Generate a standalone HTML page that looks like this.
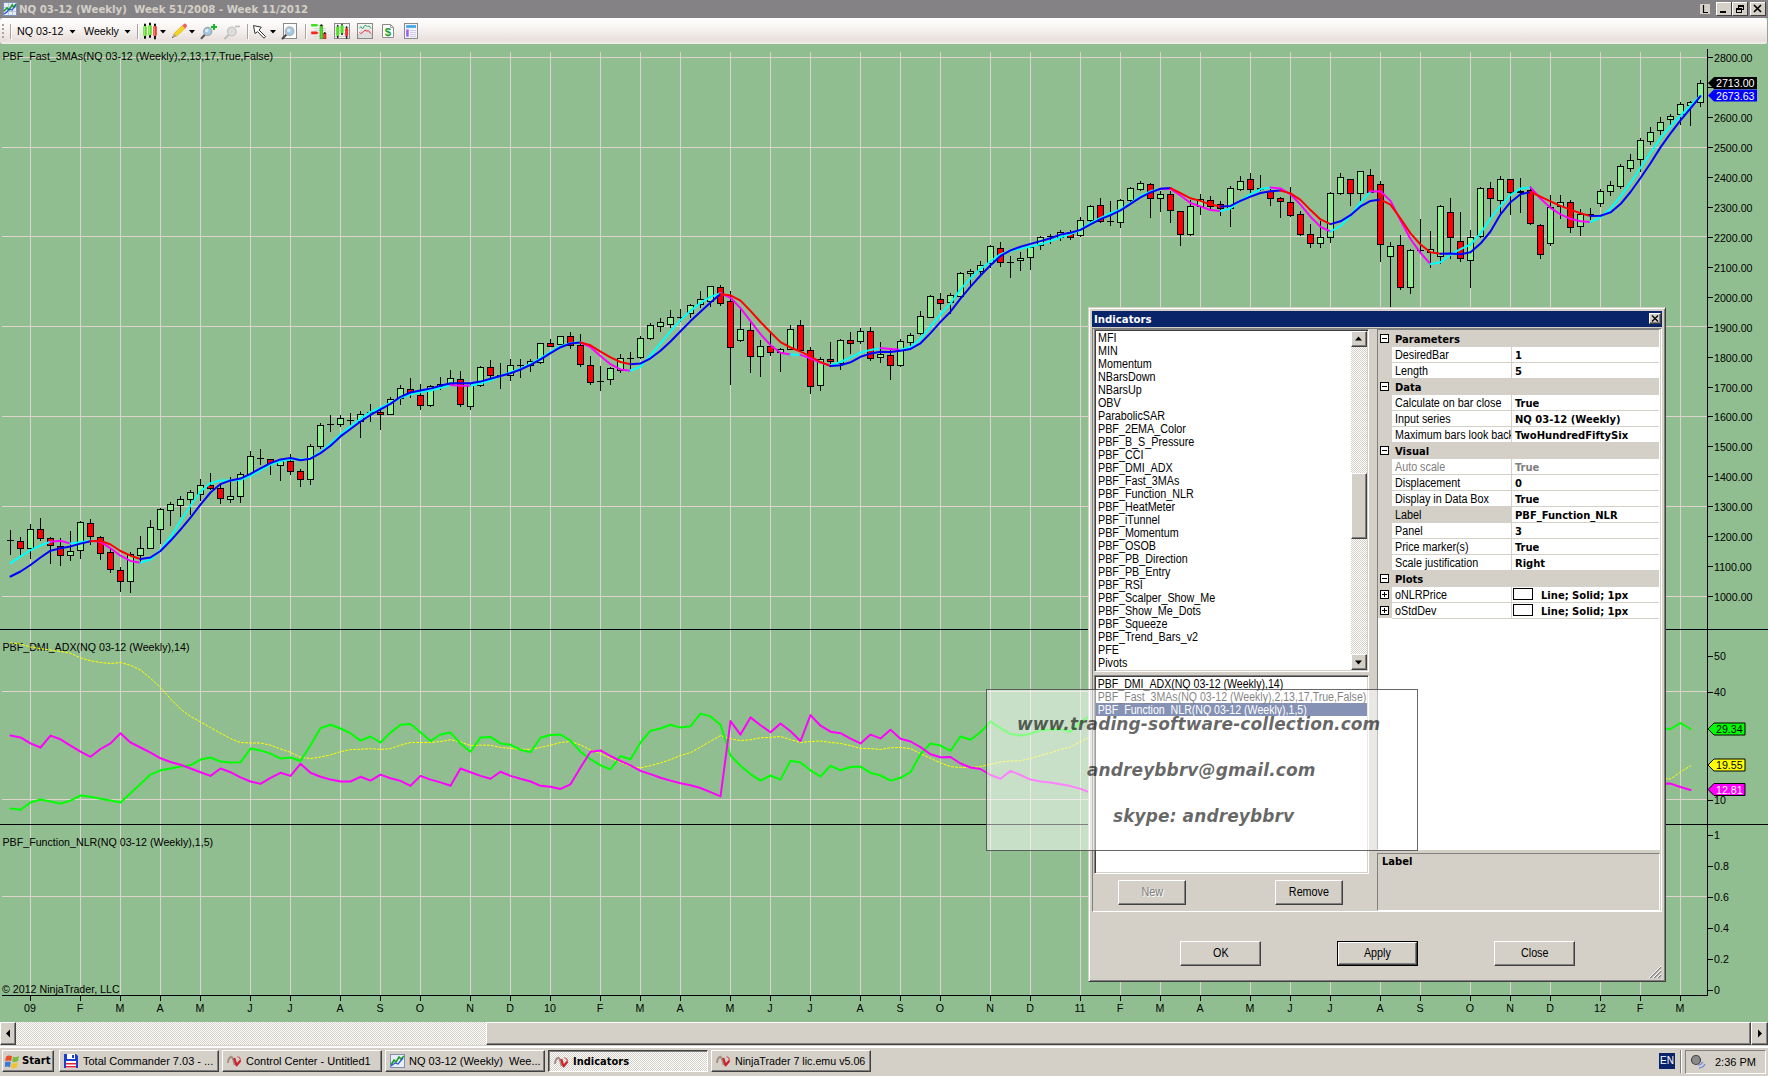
<!DOCTYPE html><html><head><meta charset="utf-8"><title>NQ 03-12 (Weekly)</title><style>
*{box-sizing:border-box;margin:0;padding:0}
html,body{width:1768px;height:1076px;overflow:hidden;background:#91BE90;font-family:"Liberation Sans",sans-serif;font-size:11px;color:#000}
.abs{position:absolute}
#title{left:0;top:0;width:1768px;height:18px;background:#848284;color:#D4D0C8;font-family:'DejaVu Sans Condensed','Liberation Sans',sans-serif;font-weight:bold;font-size:11.35px;line-height:17px;white-space:pre}
#toolbar{left:0;top:18px;width:1768px;height:26px;background:linear-gradient(#ffffff 0%,#fbf9f8 25%,#f2edeb 55%,#e7dfdc 86%,#eee8e6 96%,#f6f1f0 100%)}
.raised{background:#D4D0C8;border:1px solid;border-color:#fff #404040 #404040 #fff;box-shadow:inset -1px -1px 0 #808080,inset 1px 1px 0 #D4D0C8}
.sunken{border:1px solid;border-color:#808080 #fff #fff #808080;box-shadow:inset 1px 1px 0 #404040,inset -1px -1px 0 #D4D0C8}
.btn{background:#D4D0C8;border:1px solid;border-color:#fff #404040 #404040 #fff;box-shadow:inset -1px -1px 0 #808080;text-align:center;font-size:11px}
.tb{top:1050px;height:22px;background:#D4D0C8;border:1px solid;border-color:#fff #404040 #404040 #fff;box-shadow:inset -1px -1px 0 #808080;font-size:11px;line-height:20px;white-space:nowrap;overflow:hidden}
</style></head><body>
<svg class="abs" style="left:0;top:0" width="1768" height="1076" viewBox="0 0 1768 1076" font-family="Liberation Sans, sans-serif" font-size="10.67">
<g shape-rendering="crispEdges" stroke="#DDD5CD" stroke-width="1"><line x1="30.5" y1="57" x2="30.5" y2="995"/><line x1="80.5" y1="57" x2="80.5" y2="995"/><line x1="120.5" y1="57" x2="120.5" y2="995"/><line x1="160.5" y1="57" x2="160.5" y2="995"/><line x1="200.5" y1="57" x2="200.5" y2="995"/><line x1="250.5" y1="57" x2="250.5" y2="995"/><line x1="290.5" y1="52" x2="290.5" y2="995"/><line x1="340.5" y1="52" x2="340.5" y2="995"/><line x1="380.5" y1="52" x2="380.5" y2="995"/><line x1="420.5" y1="52" x2="420.5" y2="995"/><line x1="470.5" y1="52" x2="470.5" y2="995"/><line x1="510.5" y1="52" x2="510.5" y2="995"/><line x1="550.5" y1="52" x2="550.5" y2="995"/><line x1="600.5" y1="52" x2="600.5" y2="995"/><line x1="640.5" y1="52" x2="640.5" y2="995"/><line x1="680.5" y1="52" x2="680.5" y2="995"/><line x1="730.5" y1="52" x2="730.5" y2="995"/><line x1="770.5" y1="52" x2="770.5" y2="995"/><line x1="810.5" y1="52" x2="810.5" y2="995"/><line x1="860.5" y1="52" x2="860.5" y2="995"/><line x1="900.5" y1="52" x2="900.5" y2="995"/><line x1="940.5" y1="52" x2="940.5" y2="995"/><line x1="990.5" y1="52" x2="990.5" y2="995"/><line x1="1030.5" y1="52" x2="1030.5" y2="995"/><line x1="1080.5" y1="52" x2="1080.5" y2="995"/><line x1="1120.5" y1="52" x2="1120.5" y2="995"/><line x1="1160.5" y1="52" x2="1160.5" y2="995"/><line x1="1200.5" y1="52" x2="1200.5" y2="995"/><line x1="1250.5" y1="52" x2="1250.5" y2="995"/><line x1="1290.5" y1="52" x2="1290.5" y2="995"/><line x1="1330.5" y1="52" x2="1330.5" y2="995"/><line x1="1380.5" y1="52" x2="1380.5" y2="995"/><line x1="1420.5" y1="52" x2="1420.5" y2="995"/><line x1="1470.5" y1="52" x2="1470.5" y2="995"/><line x1="1510.5" y1="52" x2="1510.5" y2="995"/><line x1="1550.5" y1="52" x2="1550.5" y2="995"/><line x1="1600.5" y1="52" x2="1600.5" y2="995"/><line x1="1640.5" y1="52" x2="1640.5" y2="995"/><line x1="1680.5" y1="52" x2="1680.5" y2="995"/><line x1="2" y1="57.5" x2="1707" y2="57.5"/><line x1="2" y1="147.5" x2="1707" y2="147.5"/><line x1="2" y1="236.5" x2="1707" y2="236.5"/><line x1="2" y1="326.5" x2="1707" y2="326.5"/><line x1="2" y1="416.5" x2="1707" y2="416.5"/><line x1="2" y1="506.5" x2="1707" y2="506.5"/><line x1="2" y1="596.5" x2="1707" y2="596.5"/><line x1="2" y1="691.5" x2="1707" y2="691.5"/><line x1="2" y1="799.5" x2="1707" y2="799.5"/><line x1="2" y1="896.5" x2="1707" y2="896.5"/></g>
<g shape-rendering="crispEdges" stroke="#000" stroke-width="1">
<line x1="0" y1="629.5" x2="1768" y2="629.5"/><line x1="0" y1="824.5" x2="1768" y2="824.5"/>
<line x1="1707.5" y1="49" x2="1707.5" y2="995"/>
<line x1="2" y1="995.5" x2="1708" y2="995.5"/>
<line x1="1708" y1="596.5" x2="1713" y2="596.5"/>
<line x1="1708" y1="566.5" x2="1713" y2="566.5"/>
<line x1="1708" y1="536.5" x2="1713" y2="536.5"/>
<line x1="1708" y1="506.5" x2="1713" y2="506.5"/>
<line x1="1708" y1="476.5" x2="1713" y2="476.5"/>
<line x1="1708" y1="446.5" x2="1713" y2="446.5"/>
<line x1="1708" y1="416.5" x2="1713" y2="416.5"/>
<line x1="1708" y1="387.5" x2="1713" y2="387.5"/>
<line x1="1708" y1="357.5" x2="1713" y2="357.5"/>
<line x1="1708" y1="327.5" x2="1713" y2="327.5"/>
<line x1="1708" y1="297.5" x2="1713" y2="297.5"/>
<line x1="1708" y1="267.5" x2="1713" y2="267.5"/>
<line x1="1708" y1="237.5" x2="1713" y2="237.5"/>
<line x1="1708" y1="207.5" x2="1713" y2="207.5"/>
<line x1="1708" y1="177.5" x2="1713" y2="177.5"/>
<line x1="1708" y1="147.5" x2="1713" y2="147.5"/>
<line x1="1708" y1="117.5" x2="1713" y2="117.5"/>
<line x1="1708" y1="87.5" x2="1713" y2="87.5"/>
<line x1="1708" y1="57.5" x2="1713" y2="57.5"/>
<line x1="1708" y1="656.5" x2="1713" y2="656.5"/>
<line x1="1708" y1="692.5" x2="1713" y2="692.5"/>
<line x1="1708" y1="800.5" x2="1713" y2="800.5"/>
<line x1="1708" y1="835.5" x2="1713" y2="835.5"/>
<line x1="1708" y1="866.5" x2="1713" y2="866.5"/>
<line x1="1708" y1="897.5" x2="1713" y2="897.5"/>
<line x1="1708" y1="928.5" x2="1713" y2="928.5"/>
<line x1="1708" y1="959.5" x2="1713" y2="959.5"/>
<line x1="1708" y1="990.5" x2="1713" y2="990.5"/>
<line x1="30.5" y1="996" x2="30.5" y2="1001"/>
<line x1="80.5" y1="996" x2="80.5" y2="1001"/>
<line x1="120.5" y1="996" x2="120.5" y2="1001"/>
<line x1="160.5" y1="996" x2="160.5" y2="1001"/>
<line x1="200.5" y1="996" x2="200.5" y2="1001"/>
<line x1="250.5" y1="996" x2="250.5" y2="1001"/>
<line x1="290.5" y1="996" x2="290.5" y2="1001"/>
<line x1="340.5" y1="996" x2="340.5" y2="1001"/>
<line x1="380.5" y1="996" x2="380.5" y2="1001"/>
<line x1="420.5" y1="996" x2="420.5" y2="1001"/>
<line x1="470.5" y1="996" x2="470.5" y2="1001"/>
<line x1="510.5" y1="996" x2="510.5" y2="1001"/>
<line x1="550.5" y1="996" x2="550.5" y2="1001"/>
<line x1="600.5" y1="996" x2="600.5" y2="1001"/>
<line x1="640.5" y1="996" x2="640.5" y2="1001"/>
<line x1="680.5" y1="996" x2="680.5" y2="1001"/>
<line x1="730.5" y1="996" x2="730.5" y2="1001"/>
<line x1="770.5" y1="996" x2="770.5" y2="1001"/>
<line x1="810.5" y1="996" x2="810.5" y2="1001"/>
<line x1="860.5" y1="996" x2="860.5" y2="1001"/>
<line x1="900.5" y1="996" x2="900.5" y2="1001"/>
<line x1="940.5" y1="996" x2="940.5" y2="1001"/>
<line x1="990.5" y1="996" x2="990.5" y2="1001"/>
<line x1="1030.5" y1="996" x2="1030.5" y2="1001"/>
<line x1="1080.5" y1="996" x2="1080.5" y2="1001"/>
<line x1="1120.5" y1="996" x2="1120.5" y2="1001"/>
<line x1="1160.5" y1="996" x2="1160.5" y2="1001"/>
<line x1="1200.5" y1="996" x2="1200.5" y2="1001"/>
<line x1="1250.5" y1="996" x2="1250.5" y2="1001"/>
<line x1="1290.5" y1="996" x2="1290.5" y2="1001"/>
<line x1="1330.5" y1="996" x2="1330.5" y2="1001"/>
<line x1="1380.5" y1="996" x2="1380.5" y2="1001"/>
<line x1="1420.5" y1="996" x2="1420.5" y2="1001"/>
<line x1="1470.5" y1="996" x2="1470.5" y2="1001"/>
<line x1="1510.5" y1="996" x2="1510.5" y2="1001"/>
<line x1="1550.5" y1="996" x2="1550.5" y2="1001"/>
<line x1="1600.5" y1="996" x2="1600.5" y2="1001"/>
<line x1="1640.5" y1="996" x2="1640.5" y2="1001"/>
<line x1="1680.5" y1="996" x2="1680.5" y2="1001"/>
</g>
<g fill="#000">
<text x="1714" y="600.6">1000.00</text>
<text x="1714" y="570.6">1100.00</text>
<text x="1714" y="540.6">1200.00</text>
<text x="1714" y="510.6">1300.00</text>
<text x="1714" y="480.6">1400.00</text>
<text x="1714" y="450.6">1500.00</text>
<text x="1714" y="420.6">1600.00</text>
<text x="1714" y="391.6">1700.00</text>
<text x="1714" y="361.6">1800.00</text>
<text x="1714" y="331.6">1900.00</text>
<text x="1714" y="301.6">2000.00</text>
<text x="1714" y="271.6">2100.00</text>
<text x="1714" y="241.6">2200.00</text>
<text x="1714" y="211.6">2300.00</text>
<text x="1714" y="181.6">2400.00</text>
<text x="1714" y="151.6">2500.00</text>
<text x="1714" y="121.6">2600.00</text>
<text x="1714" y="61.6">2800.00</text>
<text x="1714" y="660">50</text>
<text x="1714" y="696">40</text>
<text x="1714" y="804">10</text>
<text x="1714" y="839">1</text>
<text x="1714" y="870">0.8</text>
<text x="1714" y="901">0.6</text>
<text x="1714" y="932">0.4</text>
<text x="1714" y="963">0.2</text>
<text x="1714" y="994">0</text>
<text x="30" y="1012" text-anchor="middle">09</text>
<text x="80" y="1012" text-anchor="middle">F</text>
<text x="120" y="1012" text-anchor="middle">M</text>
<text x="160" y="1012" text-anchor="middle">A</text>
<text x="200" y="1012" text-anchor="middle">M</text>
<text x="250" y="1012" text-anchor="middle">J</text>
<text x="290" y="1012" text-anchor="middle">J</text>
<text x="340" y="1012" text-anchor="middle">A</text>
<text x="380" y="1012" text-anchor="middle">S</text>
<text x="420" y="1012" text-anchor="middle">O</text>
<text x="470" y="1012" text-anchor="middle">N</text>
<text x="510" y="1012" text-anchor="middle">D</text>
<text x="550" y="1012" text-anchor="middle">10</text>
<text x="600" y="1012" text-anchor="middle">F</text>
<text x="640" y="1012" text-anchor="middle">M</text>
<text x="680" y="1012" text-anchor="middle">A</text>
<text x="730" y="1012" text-anchor="middle">M</text>
<text x="770" y="1012" text-anchor="middle">J</text>
<text x="810" y="1012" text-anchor="middle">J</text>
<text x="860" y="1012" text-anchor="middle">A</text>
<text x="900" y="1012" text-anchor="middle">S</text>
<text x="940" y="1012" text-anchor="middle">O</text>
<text x="990" y="1012" text-anchor="middle">N</text>
<text x="1030" y="1012" text-anchor="middle">D</text>
<text x="1080" y="1012" text-anchor="middle">11</text>
<text x="1120" y="1012" text-anchor="middle">F</text>
<text x="1160" y="1012" text-anchor="middle">M</text>
<text x="1200" y="1012" text-anchor="middle">A</text>
<text x="1250" y="1012" text-anchor="middle">M</text>
<text x="1290" y="1012" text-anchor="middle">J</text>
<text x="1330" y="1012" text-anchor="middle">J</text>
<text x="1380" y="1012" text-anchor="middle">A</text>
<text x="1420" y="1012" text-anchor="middle">S</text>
<text x="1470" y="1012" text-anchor="middle">O</text>
<text x="1510" y="1012" text-anchor="middle">N</text>
<text x="1550" y="1012" text-anchor="middle">D</text>
<text x="1600" y="1012" text-anchor="middle">12</text>
<text x="1640" y="1012" text-anchor="middle">F</text>
<text x="1680" y="1012" text-anchor="middle">M</text>
<text x="2.5" y="60">PBF_Fast_3MAs(NQ 03-12 (Weekly),2,13,17,True,False)</text>
<text x="2.5" y="651">PBF_DMI_ADX(NQ 03-12 (Weekly),14)</text>
<text x="2.5" y="846">PBF_Function_NLR(NQ 03-12 (Weekly),1,5)</text>
<text x="2" y="993">© 2012 NinjaTrader, LLC</text>
</g>
<g shape-rendering="crispEdges" stroke="#000" stroke-width="1">
<line x1="10.5" y1="530" x2="10.5" y2="555"/>
<line x1="7" y1="540.5" x2="14" y2="540.5"/>
<line x1="20.5" y1="537" x2="20.5" y2="555"/>
<rect x="17.5" y="541.5" width="6" height="7" fill="#FF0000"/>
<line x1="30.5" y1="524" x2="30.5" y2="559"/>
<rect x="27.5" y="529.5" width="6" height="19" fill="#90EE90"/>
<line x1="40.5" y1="518" x2="40.5" y2="541"/>
<rect x="37.5" y="529.5" width="6" height="9" fill="#FF0000"/>
<line x1="50.5" y1="537" x2="50.5" y2="564"/>
<rect x="47.5" y="538.5" width="6" height="7" fill="#FF0000"/>
<line x1="60.5" y1="538" x2="60.5" y2="566"/>
<rect x="57.5" y="546.5" width="6" height="9" fill="#FF0000"/>
<line x1="70.5" y1="531" x2="70.5" y2="561"/>
<rect x="67.5" y="551.5" width="6" height="4" fill="#90EE90"/>
<line x1="80.5" y1="521" x2="80.5" y2="559"/>
<rect x="77.5" y="522.5" width="6" height="28" fill="#90EE90"/>
<line x1="90.5" y1="519" x2="90.5" y2="545"/>
<rect x="87.5" y="523.5" width="6" height="13" fill="#FF0000"/>
<line x1="100.5" y1="536" x2="100.5" y2="560"/>
<rect x="97.5" y="537.5" width="6" height="16" fill="#FF0000"/>
<line x1="110.5" y1="548" x2="110.5" y2="573"/>
<rect x="107.5" y="552.5" width="6" height="17" fill="#FF0000"/>
<line x1="120.5" y1="567" x2="120.5" y2="592"/>
<rect x="117.5" y="570.5" width="6" height="11" fill="#FF0000"/>
<line x1="130.5" y1="552" x2="130.5" y2="593"/>
<rect x="127.5" y="554.5" width="6" height="27" fill="#90EE90"/>
<line x1="140.5" y1="536" x2="140.5" y2="563"/>
<rect x="137.5" y="548.5" width="6" height="7" fill="#90EE90"/>
<line x1="150.5" y1="520" x2="150.5" y2="549"/>
<rect x="147.5" y="527.5" width="6" height="21" fill="#90EE90"/>
<line x1="160.5" y1="508" x2="160.5" y2="544"/>
<rect x="157.5" y="509.5" width="6" height="20" fill="#90EE90"/>
<line x1="170.5" y1="502" x2="170.5" y2="526"/>
<rect x="167.5" y="504.5" width="6" height="6" fill="#90EE90"/>
<line x1="180.5" y1="496" x2="180.5" y2="517"/>
<rect x="177.5" y="499.5" width="6" height="6" fill="#90EE90"/>
<line x1="190.5" y1="490" x2="190.5" y2="515"/>
<rect x="187.5" y="492.5" width="6" height="7" fill="#90EE90"/>
<line x1="200.5" y1="479" x2="200.5" y2="501"/>
<rect x="197.5" y="485.5" width="6" height="9" fill="#90EE90"/>
<line x1="210.5" y1="473" x2="210.5" y2="490"/>
<rect x="207.5" y="485.5" width="6" height="3" fill="#FF0000"/>
<line x1="220.5" y1="483" x2="220.5" y2="504"/>
<rect x="217.5" y="488.5" width="6" height="10" fill="#FF0000"/>
<line x1="230.5" y1="477" x2="230.5" y2="503"/>
<rect x="227.5" y="496.5" width="6" height="3" fill="#90EE90"/>
<line x1="240.5" y1="472" x2="240.5" y2="503"/>
<rect x="237.5" y="474.5" width="6" height="22" fill="#90EE90"/>
<line x1="250.5" y1="451" x2="250.5" y2="475"/>
<rect x="247.5" y="456.5" width="6" height="18" fill="#90EE90"/>
<line x1="260.5" y1="449" x2="260.5" y2="465"/>
<line x1="257" y1="458.5" x2="264" y2="458.5"/>
<line x1="270.5" y1="459" x2="270.5" y2="475"/>
<rect x="267.5" y="459.5" width="6" height="4" fill="#FF0000"/>
<line x1="280.5" y1="459" x2="280.5" y2="481"/>
<rect x="277.5" y="461.5" width="6" height="4" fill="#90EE90"/>
<line x1="290.5" y1="454" x2="290.5" y2="475"/>
<rect x="287.5" y="461.5" width="6" height="10" fill="#FF0000"/>
<line x1="300.5" y1="469" x2="300.5" y2="487"/>
<rect x="297.5" y="471.5" width="6" height="8" fill="#FF0000"/>
<line x1="310.5" y1="444" x2="310.5" y2="485"/>
<rect x="307.5" y="446.5" width="6" height="33" fill="#90EE90"/>
<line x1="320.5" y1="423" x2="320.5" y2="449"/>
<rect x="317.5" y="425.5" width="6" height="21" fill="#90EE90"/>
<line x1="330.5" y1="415" x2="330.5" y2="432"/>
<line x1="327" y1="424.5" x2="334" y2="424.5"/>
<line x1="340.5" y1="415" x2="340.5" y2="427"/>
<rect x="337.5" y="418.5" width="6" height="6" fill="#90EE90"/>
<line x1="350.5" y1="413" x2="350.5" y2="426"/>
<line x1="347" y1="420.5" x2="354" y2="420.5"/>
<line x1="360.5" y1="411" x2="360.5" y2="438"/>
<rect x="357.5" y="414.5" width="6" height="7" fill="#90EE90"/>
<line x1="370.5" y1="404" x2="370.5" y2="422"/>
<line x1="367" y1="412.5" x2="374" y2="412.5"/>
<line x1="380.5" y1="409" x2="380.5" y2="430"/>
<rect x="377.5" y="412.5" width="6" height="2" fill="#FF0000"/>
<line x1="390.5" y1="397" x2="390.5" y2="415"/>
<rect x="387.5" y="399.5" width="6" height="15" fill="#90EE90"/>
<line x1="400.5" y1="385" x2="400.5" y2="405"/>
<rect x="397.5" y="388.5" width="6" height="10" fill="#90EE90"/>
<line x1="410.5" y1="378" x2="410.5" y2="398"/>
<rect x="407.5" y="389.5" width="6" height="4" fill="#FF0000"/>
<line x1="420.5" y1="384" x2="420.5" y2="410"/>
<rect x="417.5" y="395.5" width="6" height="10" fill="#FF0000"/>
<line x1="430.5" y1="385" x2="430.5" y2="407"/>
<rect x="427.5" y="386.5" width="6" height="19" fill="#90EE90"/>
<line x1="440.5" y1="377" x2="440.5" y2="390"/>
<rect x="437.5" y="384.5" width="6" height="2" fill="#90EE90"/>
<line x1="450.5" y1="370" x2="450.5" y2="385"/>
<rect x="447.5" y="378.5" width="6" height="6" fill="#90EE90"/>
<line x1="460.5" y1="371" x2="460.5" y2="407"/>
<rect x="457.5" y="379.5" width="6" height="25" fill="#FF0000"/>
<line x1="470.5" y1="384" x2="470.5" y2="410"/>
<rect x="467.5" y="385.5" width="6" height="21" fill="#90EE90"/>
<line x1="480.5" y1="366" x2="480.5" y2="387"/>
<rect x="477.5" y="367.5" width="6" height="18" fill="#90EE90"/>
<line x1="490.5" y1="360" x2="490.5" y2="378"/>
<rect x="487.5" y="367.5" width="6" height="8" fill="#FF0000"/>
<line x1="500.5" y1="363" x2="500.5" y2="389"/>
<line x1="497" y1="375.5" x2="504" y2="375.5"/>
<line x1="510.5" y1="359" x2="510.5" y2="381"/>
<rect x="507.5" y="365.5" width="6" height="10" fill="#90EE90"/>
<line x1="520.5" y1="359" x2="520.5" y2="378"/>
<line x1="517" y1="365.5" x2="524" y2="365.5"/>
<line x1="530.5" y1="359" x2="530.5" y2="372"/>
<rect x="527.5" y="361.5" width="6" height="4" fill="#90EE90"/>
<line x1="540.5" y1="343" x2="540.5" y2="364"/>
<rect x="537.5" y="343.5" width="6" height="19" fill="#90EE90"/>
<line x1="550.5" y1="339" x2="550.5" y2="347"/>
<rect x="547.5" y="343.5" width="6" height="3" fill="#FF0000"/>
<line x1="560.5" y1="336" x2="560.5" y2="345"/>
<rect x="557.5" y="336.5" width="6" height="8" fill="#90EE90"/>
<line x1="570.5" y1="332" x2="570.5" y2="349"/>
<rect x="567.5" y="336.5" width="6" height="9" fill="#FF0000"/>
<line x1="580.5" y1="334" x2="580.5" y2="367"/>
<rect x="577.5" y="345.5" width="6" height="19" fill="#FF0000"/>
<line x1="590.5" y1="356" x2="590.5" y2="385"/>
<rect x="587.5" y="365.5" width="6" height="17" fill="#FF0000"/>
<line x1="600.5" y1="366" x2="600.5" y2="391"/>
<line x1="597" y1="381.5" x2="604" y2="381.5"/>
<line x1="610.5" y1="367" x2="610.5" y2="385"/>
<rect x="607.5" y="368.5" width="6" height="11" fill="#90EE90"/>
<line x1="620.5" y1="354" x2="620.5" y2="373"/>
<rect x="617.5" y="358.5" width="6" height="12" fill="#90EE90"/>
<line x1="630.5" y1="352" x2="630.5" y2="369"/>
<line x1="627" y1="358.5" x2="634" y2="358.5"/>
<line x1="640.5" y1="336" x2="640.5" y2="359"/>
<rect x="637.5" y="338.5" width="6" height="19" fill="#90EE90"/>
<line x1="650.5" y1="323" x2="650.5" y2="340"/>
<rect x="647.5" y="325.5" width="6" height="13" fill="#90EE90"/>
<line x1="660.5" y1="318" x2="660.5" y2="332"/>
<rect x="657.5" y="322.5" width="6" height="4" fill="#90EE90"/>
<line x1="670.5" y1="310" x2="670.5" y2="328"/>
<rect x="667.5" y="317.5" width="6" height="7" fill="#90EE90"/>
<line x1="680.5" y1="309" x2="680.5" y2="322"/>
<line x1="677" y1="317.5" x2="684" y2="317.5"/>
<line x1="690.5" y1="304" x2="690.5" y2="318"/>
<rect x="687.5" y="305.5" width="6" height="8" fill="#90EE90"/>
<line x1="700.5" y1="291" x2="700.5" y2="308"/>
<rect x="697.5" y="299.5" width="6" height="5" fill="#90EE90"/>
<line x1="710.5" y1="286" x2="710.5" y2="307"/>
<rect x="707.5" y="286.5" width="6" height="15" fill="#90EE90"/>
<line x1="720.5" y1="285" x2="720.5" y2="306"/>
<rect x="717.5" y="287.5" width="6" height="16" fill="#FF0000"/>
<line x1="730.5" y1="291" x2="730.5" y2="385"/>
<rect x="727.5" y="301.5" width="6" height="46" fill="#FF0000"/>
<line x1="740.5" y1="308" x2="740.5" y2="342"/>
<rect x="737.5" y="329.5" width="6" height="11" fill="#90EE90"/>
<line x1="750.5" y1="322" x2="750.5" y2="373"/>
<rect x="747.5" y="330.5" width="6" height="26" fill="#FF0000"/>
<line x1="760.5" y1="340" x2="760.5" y2="377"/>
<rect x="757.5" y="346.5" width="6" height="10" fill="#90EE90"/>
<line x1="770.5" y1="331" x2="770.5" y2="356"/>
<rect x="767.5" y="346.5" width="6" height="6" fill="#FF0000"/>
<line x1="780.5" y1="348" x2="780.5" y2="372"/>
<rect x="777.5" y="349.5" width="6" height="3" fill="#90EE90"/>
<line x1="790.5" y1="325" x2="790.5" y2="350"/>
<rect x="787.5" y="329.5" width="6" height="20" fill="#90EE90"/>
<line x1="800.5" y1="320" x2="800.5" y2="352"/>
<rect x="797.5" y="325.5" width="6" height="25" fill="#FF0000"/>
<line x1="810.5" y1="347" x2="810.5" y2="394"/>
<rect x="807.5" y="350.5" width="6" height="36" fill="#FF0000"/>
<line x1="820.5" y1="357" x2="820.5" y2="391"/>
<rect x="817.5" y="359.5" width="6" height="26" fill="#90EE90"/>
<line x1="830.5" y1="342" x2="830.5" y2="367"/>
<rect x="827.5" y="359.5" width="6" height="2" fill="#FF0000"/>
<line x1="840.5" y1="339" x2="840.5" y2="370"/>
<rect x="837.5" y="340.5" width="6" height="23" fill="#90EE90"/>
<line x1="850.5" y1="332" x2="850.5" y2="354"/>
<rect x="847.5" y="340.5" width="6" height="3" fill="#FF0000"/>
<line x1="860.5" y1="328" x2="860.5" y2="344"/>
<rect x="857.5" y="331.5" width="6" height="10" fill="#90EE90"/>
<line x1="870.5" y1="327" x2="870.5" y2="361"/>
<rect x="867.5" y="331.5" width="6" height="27" fill="#FF0000"/>
<line x1="880.5" y1="342" x2="880.5" y2="363"/>
<rect x="877.5" y="354.5" width="6" height="3" fill="#90EE90"/>
<line x1="890.5" y1="349" x2="890.5" y2="380"/>
<rect x="887.5" y="355.5" width="6" height="10" fill="#FF0000"/>
<line x1="900.5" y1="339" x2="900.5" y2="367"/>
<rect x="897.5" y="341.5" width="6" height="24" fill="#90EE90"/>
<line x1="910.5" y1="333" x2="910.5" y2="348"/>
<rect x="907.5" y="335.5" width="6" height="7" fill="#90EE90"/>
<line x1="920.5" y1="311" x2="920.5" y2="335"/>
<rect x="917.5" y="316.5" width="6" height="17" fill="#90EE90"/>
<line x1="930.5" y1="295" x2="930.5" y2="318"/>
<rect x="927.5" y="296.5" width="6" height="21" fill="#90EE90"/>
<line x1="940.5" y1="293" x2="940.5" y2="310"/>
<rect x="937.5" y="299.5" width="6" height="4" fill="#FF0000"/>
<line x1="950.5" y1="293" x2="950.5" y2="314"/>
<rect x="947.5" y="295.5" width="6" height="7" fill="#90EE90"/>
<line x1="960.5" y1="272" x2="960.5" y2="299"/>
<rect x="957.5" y="273.5" width="6" height="23" fill="#90EE90"/>
<line x1="970.5" y1="269" x2="970.5" y2="287"/>
<rect x="967.5" y="271.5" width="6" height="2" fill="#90EE90"/>
<line x1="980.5" y1="261" x2="980.5" y2="276"/>
<rect x="977.5" y="265.5" width="6" height="6" fill="#90EE90"/>
<line x1="990.5" y1="245" x2="990.5" y2="268"/>
<rect x="987.5" y="246.5" width="6" height="17" fill="#90EE90"/>
<line x1="1000.5" y1="242" x2="1000.5" y2="267"/>
<rect x="997.5" y="248.5" width="6" height="14" fill="#FF0000"/>
<line x1="1010.5" y1="256" x2="1010.5" y2="278"/>
<line x1="1007" y1="262.5" x2="1014" y2="262.5"/>
<line x1="1020.5" y1="252" x2="1020.5" y2="271"/>
<rect x="1017.5" y="258.5" width="6" height="2" fill="#90EE90"/>
<line x1="1030.5" y1="246" x2="1030.5" y2="270"/>
<rect x="1027.5" y="247.5" width="6" height="10" fill="#90EE90"/>
<line x1="1040.5" y1="236" x2="1040.5" y2="250"/>
<rect x="1037.5" y="237.5" width="6" height="8" fill="#90EE90"/>
<line x1="1050.5" y1="234" x2="1050.5" y2="244"/>
<line x1="1047" y1="236.5" x2="1054" y2="236.5"/>
<line x1="1060.5" y1="230" x2="1060.5" y2="241"/>
<rect x="1057.5" y="232.5" width="6" height="5" fill="#90EE90"/>
<line x1="1070.5" y1="230" x2="1070.5" y2="240"/>
<rect x="1067.5" y="232.5" width="6" height="5" fill="#FF0000"/>
<line x1="1080.5" y1="217" x2="1080.5" y2="237"/>
<rect x="1077.5" y="220.5" width="6" height="15" fill="#90EE90"/>
<line x1="1090.5" y1="205" x2="1090.5" y2="223"/>
<rect x="1087.5" y="206.5" width="6" height="14" fill="#90EE90"/>
<line x1="1100.5" y1="198" x2="1100.5" y2="223"/>
<rect x="1097.5" y="205.5" width="6" height="16" fill="#FF0000"/>
<line x1="1110.5" y1="201" x2="1110.5" y2="226"/>
<line x1="1107" y1="221.5" x2="1114" y2="221.5"/>
<line x1="1120.5" y1="199" x2="1120.5" y2="228"/>
<rect x="1117.5" y="200.5" width="6" height="22" fill="#90EE90"/>
<line x1="1130.5" y1="187" x2="1130.5" y2="202"/>
<rect x="1127.5" y="188.5" width="6" height="12" fill="#90EE90"/>
<line x1="1140.5" y1="181" x2="1140.5" y2="191"/>
<rect x="1137.5" y="183.5" width="6" height="6" fill="#90EE90"/>
<line x1="1150.5" y1="183" x2="1150.5" y2="218"/>
<rect x="1147.5" y="184.5" width="6" height="14" fill="#FF0000"/>
<line x1="1160.5" y1="191" x2="1160.5" y2="212"/>
<rect x="1157.5" y="194.5" width="6" height="4" fill="#90EE90"/>
<line x1="1170.5" y1="191" x2="1170.5" y2="223"/>
<rect x="1167.5" y="194.5" width="6" height="16" fill="#FF0000"/>
<line x1="1180.5" y1="211" x2="1180.5" y2="246"/>
<rect x="1177.5" y="211.5" width="6" height="23" fill="#FF0000"/>
<line x1="1190.5" y1="200" x2="1190.5" y2="236"/>
<rect x="1187.5" y="206.5" width="6" height="28" fill="#90EE90"/>
<line x1="1200.5" y1="194" x2="1200.5" y2="215"/>
<rect x="1197.5" y="199.5" width="6" height="7" fill="#90EE90"/>
<line x1="1210.5" y1="196" x2="1210.5" y2="210"/>
<rect x="1207.5" y="200.5" width="6" height="6" fill="#FF0000"/>
<line x1="1220.5" y1="201" x2="1220.5" y2="216"/>
<rect x="1217.5" y="204.5" width="6" height="4" fill="#FF0000"/>
<line x1="1230.5" y1="186" x2="1230.5" y2="227"/>
<rect x="1227.5" y="188.5" width="6" height="20" fill="#90EE90"/>
<line x1="1240.5" y1="176" x2="1240.5" y2="191"/>
<rect x="1237.5" y="181.5" width="6" height="8" fill="#90EE90"/>
<line x1="1250.5" y1="173" x2="1250.5" y2="193"/>
<rect x="1247.5" y="179.5" width="6" height="10" fill="#FF0000"/>
<line x1="1260.5" y1="175" x2="1260.5" y2="191"/>
<rect x="1257.5" y="188.5" width="6" height="1" fill="#FF0000"/>
<line x1="1270.5" y1="189" x2="1270.5" y2="206"/>
<rect x="1267.5" y="191.5" width="6" height="7" fill="#FF0000"/>
<line x1="1280.5" y1="197" x2="1280.5" y2="218"/>
<rect x="1277.5" y="198.5" width="6" height="3" fill="#FF0000"/>
<line x1="1290.5" y1="187" x2="1290.5" y2="217"/>
<rect x="1287.5" y="202.5" width="6" height="13" fill="#FF0000"/>
<line x1="1300.5" y1="211" x2="1300.5" y2="236"/>
<rect x="1297.5" y="214.5" width="6" height="20" fill="#FF0000"/>
<line x1="1310.5" y1="224" x2="1310.5" y2="248"/>
<rect x="1307.5" y="234.5" width="6" height="9" fill="#FF0000"/>
<line x1="1320.5" y1="221" x2="1320.5" y2="248"/>
<rect x="1317.5" y="237.5" width="6" height="6" fill="#90EE90"/>
<line x1="1330.5" y1="192" x2="1330.5" y2="243"/>
<rect x="1327.5" y="193.5" width="6" height="44" fill="#90EE90"/>
<line x1="1340.5" y1="173" x2="1340.5" y2="195"/>
<rect x="1337.5" y="177.5" width="6" height="16" fill="#90EE90"/>
<line x1="1350.5" y1="179" x2="1350.5" y2="206"/>
<rect x="1347.5" y="179.5" width="6" height="14" fill="#FF0000"/>
<line x1="1360.5" y1="171" x2="1360.5" y2="201"/>
<rect x="1357.5" y="171.5" width="6" height="22" fill="#90EE90"/>
<line x1="1370.5" y1="169" x2="1370.5" y2="193"/>
<rect x="1367.5" y="175.5" width="6" height="17" fill="#FF0000"/>
<line x1="1380.5" y1="181" x2="1380.5" y2="262"/>
<rect x="1377.5" y="184.5" width="6" height="60" fill="#FF0000"/>
<line x1="1390.5" y1="242" x2="1390.5" y2="307"/>
<rect x="1387.5" y="246.5" width="6" height="10" fill="#90EE90"/>
<line x1="1400.5" y1="235" x2="1400.5" y2="290"/>
<rect x="1397.5" y="245.5" width="6" height="42" fill="#FF0000"/>
<line x1="1410.5" y1="249" x2="1410.5" y2="294"/>
<rect x="1407.5" y="250.5" width="6" height="37" fill="#90EE90"/>
<line x1="1420.5" y1="219" x2="1420.5" y2="252"/>
<line x1="1417" y1="250.5" x2="1424" y2="250.5"/>
<line x1="1430.5" y1="231" x2="1430.5" y2="268"/>
<rect x="1427.5" y="249.5" width="6" height="3" fill="#90EE90"/>
<line x1="1440.5" y1="205" x2="1440.5" y2="264"/>
<rect x="1437.5" y="206.5" width="6" height="50" fill="#90EE90"/>
<line x1="1450.5" y1="198" x2="1450.5" y2="259"/>
<rect x="1447.5" y="212.5" width="6" height="25" fill="#FF0000"/>
<line x1="1460.5" y1="212" x2="1460.5" y2="262"/>
<rect x="1457.5" y="241.5" width="6" height="17" fill="#FF0000"/>
<line x1="1470.5" y1="230" x2="1470.5" y2="288"/>
<rect x="1467.5" y="237.5" width="6" height="23" fill="#90EE90"/>
<line x1="1480.5" y1="187" x2="1480.5" y2="238"/>
<rect x="1477.5" y="188.5" width="6" height="48" fill="#90EE90"/>
<line x1="1490.5" y1="182" x2="1490.5" y2="218"/>
<rect x="1487.5" y="188.5" width="6" height="10" fill="#FF0000"/>
<line x1="1500.5" y1="176" x2="1500.5" y2="213"/>
<rect x="1497.5" y="179.5" width="6" height="21" fill="#90EE90"/>
<line x1="1510.5" y1="179" x2="1510.5" y2="215"/>
<rect x="1507.5" y="179.5" width="6" height="13" fill="#FF0000"/>
<line x1="1520.5" y1="178" x2="1520.5" y2="213"/>
<rect x="1517.5" y="191.5" width="6" height="1" fill="#FF0000"/>
<line x1="1530.5" y1="186" x2="1530.5" y2="225"/>
<rect x="1527.5" y="190.5" width="6" height="33" fill="#FF0000"/>
<line x1="1540.5" y1="224" x2="1540.5" y2="259"/>
<rect x="1537.5" y="225.5" width="6" height="29" fill="#FF0000"/>
<line x1="1550.5" y1="195" x2="1550.5" y2="246"/>
<rect x="1547.5" y="207.5" width="6" height="36" fill="#90EE90"/>
<line x1="1560.5" y1="195" x2="1560.5" y2="219"/>
<rect x="1557.5" y="202.5" width="6" height="4" fill="#90EE90"/>
<line x1="1570.5" y1="200" x2="1570.5" y2="233"/>
<rect x="1567.5" y="202.5" width="6" height="25" fill="#FF0000"/>
<line x1="1580.5" y1="209" x2="1580.5" y2="236"/>
<rect x="1577.5" y="214.5" width="6" height="12" fill="#90EE90"/>
<line x1="1590.5" y1="208" x2="1590.5" y2="220"/>
<line x1="1587" y1="214.5" x2="1594" y2="214.5"/>
<line x1="1600.5" y1="189" x2="1600.5" y2="207"/>
<rect x="1597.5" y="191.5" width="6" height="12" fill="#90EE90"/>
<line x1="1610.5" y1="181" x2="1610.5" y2="196"/>
<rect x="1607.5" y="185.5" width="6" height="6" fill="#90EE90"/>
<line x1="1620.5" y1="164" x2="1620.5" y2="189"/>
<rect x="1617.5" y="166.5" width="6" height="20" fill="#90EE90"/>
<line x1="1630.5" y1="154" x2="1630.5" y2="172"/>
<rect x="1627.5" y="160.5" width="6" height="8" fill="#90EE90"/>
<line x1="1640.5" y1="138" x2="1640.5" y2="172"/>
<rect x="1637.5" y="140.5" width="6" height="19" fill="#90EE90"/>
<line x1="1650.5" y1="127" x2="1650.5" y2="145"/>
<rect x="1647.5" y="132.5" width="6" height="9" fill="#90EE90"/>
<line x1="1660.5" y1="117" x2="1660.5" y2="135"/>
<rect x="1657.5" y="122.5" width="6" height="8" fill="#90EE90"/>
<line x1="1670.5" y1="114" x2="1670.5" y2="125"/>
<rect x="1667.5" y="116.5" width="6" height="3" fill="#90EE90"/>
<line x1="1680.5" y1="102" x2="1680.5" y2="125"/>
<rect x="1677.5" y="104.5" width="6" height="10" fill="#90EE90"/>
<line x1="1690.5" y1="101" x2="1690.5" y2="126"/>
<rect x="1687.5" y="102.5" width="6" height="3" fill="#90EE90"/>
<line x1="1700.5" y1="80" x2="1700.5" y2="107"/>
<rect x="1697.5" y="83.5" width="6" height="19" fill="#90EE90"/>
</g>
<g fill="none" stroke-width="2" stroke-linejoin="round" stroke-linecap="round">
<polyline stroke="#00FFFF" points="10.5,563.1 20.5,556.6 30.5,550.1 40.5,545.5 50.5,541.7"/>
<polyline stroke="#FF00FF" points="50.5,541.7 60.5,540.8 70.5,543.6"/>
<polyline stroke="#00FFFF" points="70.5,543.6 80.5,542.3 90.5,540.8"/>
<polyline stroke="#FF00FF" points="90.5,540.8 100.5,541.7 110.5,548.3 120.5,555.7 130.5,560.9 140.5,562.8"/>
<polyline stroke="#00FFFF" points="140.5,562.8 150.5,559.4 160.5,550.1 170.5,537.1 180.5,521.3 190.5,505.5 200.5,491.6 210.5,483.2 220.5,480.4 230.5,480.4 240.5,479.9 250.5,475.8 260.5,470.2 270.5,464.6 280.5,461.3 290.5,459.0 300.5,459.6 310.5,458.7 320.5,452.2 330.5,443.8 340.5,434.5 350.5,426.2 360.5,418.7 370.5,412.2 380.5,407.6 390.5,402.9 400.5,397.9 410.5,394.2 420.5,392.3 430.5,390.5 440.5,387.7 450.5,385.1"/>
<polyline stroke="#FF00FF" points="450.5,385.1 460.5,385.8 470.5,385.8"/>
<polyline stroke="#00FFFF" points="470.5,385.8 480.5,383.6 490.5,380.3 500.5,376.0 510.5,372.3 520.5,368.6 530.5,363.9 540.5,358.3 550.5,351.8 560.5,346.2 570.5,343.1 580.5,342.5"/>
<polyline stroke="#FF00FF" points="580.5,342.5 590.5,347.2 600.5,356.0 610.5,364.2 620.5,369.4 630.5,370.7"/>
<polyline stroke="#00FFFF" points="630.5,370.7 640.5,366.6 650.5,355.5 660.5,343.4 670.5,331.3 680.5,320.1 690.5,310.9 700.5,302.9 710.5,296.9 720.5,293.2"/>
<polyline stroke="#FF00FF" points="720.5,293.2 730.5,297.8 740.5,308.1 750.5,321.1 760.5,334.1 770.5,345.2 780.5,352.7 790.5,354.5"/>
<polyline stroke="#00FFFF" points="790.5,354.5 800.5,354.9"/>
<polyline stroke="#FF00FF" points="800.5,354.9 810.5,358.3 820.5,362.9 830.5,365.3"/>
<polyline stroke="#00FFFF" points="830.5,365.3 840.5,362.0 850.5,357.3 860.5,352.7 870.5,349.9 880.5,348.0"/>
<polyline stroke="#FF00FF" points="880.5,348.0 890.5,349.0 900.5,349.8"/>
<polyline stroke="#00FFFF" points="900.5,349.8 910.5,347.0 920.5,338.7 930.5,326.6 940.5,314.5 950.5,303.3 960.5,289.4 970.5,278.3 980.5,269.0 990.5,261.5 1000.5,254.1 1010.5,250.7 1020.5,248.5 1030.5,246.7 1040.5,244.4 1050.5,241.1 1060.5,237.4 1070.5,234.0 1080.5,229.9 1090.5,222.9 1100.5,217.8 1110.5,213.2 1120.5,209.5 1130.5,203.0 1140.5,196.1 1150.5,191.3 1160.5,188.7"/>
<polyline stroke="#FF00FF" points="1160.5,188.7 1170.5,189.0 1180.5,195.5 1190.5,203.0 1200.5,206.4 1210.5,210.1 1220.5,211.1"/>
<polyline stroke="#00FFFF" points="1220.5,211.1 1230.5,208.3 1240.5,200.9 1250.5,194.3 1260.5,189.1 1270.5,187.5"/>
<polyline stroke="#FF00FF" points="1270.5,187.5 1280.5,188.4 1290.5,194.3 1300.5,204.6 1310.5,216.7 1320.5,226.9 1330.5,231.5"/>
<polyline stroke="#00FFFF" points="1330.5,231.5 1340.5,225.9 1350.5,215.7 1360.5,202.7 1370.5,191.6"/>
<polyline stroke="#FF00FF" points="1370.5,191.6 1380.5,191.2 1390.5,200.9 1400.5,220.4 1410.5,239.0 1420.5,252.9 1430.5,264.1"/>
<polyline stroke="#00FFFF" points="1430.5,264.1 1440.5,262.2 1450.5,254.8 1460.5,249.2 1470.5,244.5 1480.5,233.4 1490.5,218.5 1500.5,205.9 1510.5,194.8 1520.5,188.6 1530.5,187.3"/>
<polyline stroke="#FF00FF" points="1530.5,187.3 1540.5,198.5 1550.5,207.8 1560.5,214.3 1570.5,218.9 1580.5,221.3 1590.5,222.1"/>
<polyline stroke="#00FFFF" points="1590.5,222.1 1600.5,217.1 1610.5,208.7 1620.5,196.6 1630.5,182.7 1640.5,167.8 1650.5,152.9 1660.5,138.1 1670.5,126.0 1680.5,115.8 1690.5,105.5 1700.5,95.7"/>
<polyline stroke="#0000FF" points="10.5,576.5 20.5,571.5 30.5,565.0 40.5,557.5 50.5,550.7 60.5,548.3 70.5,546.4 80.5,543.6 90.5,541.2"/>
<polyline stroke="#FF0000" points="90.5,541.2 100.5,540.8 110.5,544.5 120.5,551.0 130.5,555.7 140.5,559.0"/>
<polyline stroke="#0000FF" points="140.5,559.0 150.5,557.5 160.5,551.0 170.5,540.8 180.5,529.7 190.5,517.6 200.5,504.6 210.5,492.5 220.5,484.1 230.5,480.4 240.5,478.6 250.5,473.9 260.5,468.3 270.5,463.1 280.5,459.4 290.5,458.1 300.5,460.2 310.5,458.7 320.5,453.1 330.5,445.7 340.5,436.4 350.5,429.0 360.5,421.5 370.5,415.0 380.5,409.4 390.5,403.9 400.5,396.8 410.5,392.5 420.5,390.5 430.5,388.6 440.5,385.7 450.5,383.2 460.5,383.2 470.5,383.2 480.5,381.6 490.5,378.8 500.5,376.0 510.5,373.2 520.5,369.5 530.5,364.8 540.5,359.3 550.5,353.1 560.5,347.2 570.5,343.5 580.5,342.5"/>
<polyline stroke="#FF0000" points="580.5,342.5 590.5,345.3 600.5,351.7 610.5,357.3 620.5,362.0 630.5,364.2"/>
<polyline stroke="#0000FF" points="630.5,364.2 640.5,363.5 650.5,358.3 660.5,350.8 670.5,341.5 680.5,331.3 690.5,321.1 700.5,311.8 710.5,302.5 720.5,294.1"/>
<polyline stroke="#FF0000" points="720.5,294.1 730.5,295.4 740.5,300.6 750.5,310.9 760.5,322.0 770.5,332.2 780.5,342.1 790.5,347.5 800.5,351.7 810.5,356.4 820.5,362.0 830.5,366.1"/>
<polyline stroke="#0000FF" points="830.5,366.1 840.5,365.3 850.5,362.3 860.5,356.8 870.5,353.6 880.5,351.7 890.5,352.1 900.5,350.7 910.5,348.9 920.5,343.3 930.5,333.1 940.5,321.9 950.5,311.7 960.5,298.7 970.5,286.6 980.5,275.5 990.5,265.2 1000.5,255.9 1010.5,250.4 1020.5,246.7 1030.5,243.9 1040.5,241.1 1050.5,238.3 1060.5,234.6 1070.5,232.7 1080.5,229.9 1090.5,224.3 1100.5,219.1 1110.5,215.1 1120.5,210.4 1130.5,203.9 1140.5,197.4 1150.5,192.4 1160.5,188.7 1170.5,188.1"/>
<polyline stroke="#FF0000" points="1170.5,188.1 1180.5,193.1 1190.5,198.3 1200.5,200.9 1210.5,204.6 1220.5,206.4"/>
<polyline stroke="#0000FF" points="1220.5,206.4 1230.5,205.9 1240.5,200.9 1250.5,196.6 1260.5,193.0 1270.5,191.2 1280.5,190.6"/>
<polyline stroke="#FF0000" points="1280.5,190.6 1290.5,193.4 1300.5,199.9 1310.5,210.1 1320.5,219.4 1330.5,224.1"/>
<polyline stroke="#0000FF" points="1330.5,224.1 1340.5,221.3 1350.5,215.2 1360.5,206.4 1370.5,200.9 1380.5,199.6"/>
<polyline stroke="#FF0000" points="1380.5,199.6 1390.5,204.6 1400.5,218.5 1410.5,233.4 1420.5,244.5 1430.5,252.3 1440.5,253.8"/>
<polyline stroke="#0000FF" points="1440.5,253.8 1450.5,253.5 1460.5,254.2 1470.5,252.3 1480.5,243.6 1490.5,231.5 1500.5,214.3 1510.5,202.2 1520.5,194.2 1530.5,192.0"/>
<polyline stroke="#FF0000" points="1530.5,192.0 1540.5,196.6 1550.5,201.3 1560.5,205.9 1570.5,209.6 1580.5,213.3 1590.5,216.1"/>
<polyline stroke="#0000FF" points="1590.5,216.1 1600.5,215.8 1610.5,212.4 1620.5,204.1 1630.5,192.0 1640.5,178.0 1650.5,163.2 1660.5,147.4 1670.5,133.4 1680.5,120.4 1690.5,108.3 1700.5,96.2"/>
<polyline stroke="#FFFF00" stroke-width="1" stroke-dasharray="2 2" points="10.5,643.0 20.5,643.9 30.5,647.1 40.5,648.6 50.5,650.1 60.5,651.4 70.5,653.2 80.5,657.9 90.5,660.7 100.5,662.5 110.5,663.5 120.5,662.5 130.5,665.3 140.5,670.0 150.5,678.3 160.5,687.6 170.5,698.8 180.5,709.0 190.5,716.4 200.5,722.0 210.5,727.6 220.5,733.2 230.5,738.7 240.5,742.5 250.5,743.0 260.5,743.0 270.5,745.2 280.5,749.0 290.5,752.3 300.5,757.3 310.5,758.6 320.5,757.0 330.5,754.9 340.5,751.7 350.5,749.5 360.5,749.3 370.5,748.6 380.5,749.5 390.5,748.6 400.5,745.2 410.5,742.5 420.5,742.5 430.5,742.5 440.5,741.5 450.5,739.7 460.5,741.9 470.5,745.6 480.5,745.2 490.5,745.2 500.5,747.5 510.5,748.4 520.5,749.3 530.5,749.3 540.5,747.5 550.5,745.2 560.5,742.5 570.5,741.5 580.5,744.9 590.5,749.9 600.5,753.6 610.5,758.3 620.5,762.3 630.5,766.2 640.5,767.9 650.5,765.7 660.5,762.9 670.5,759.6 680.5,755.5 690.5,752.7 700.5,747.1 710.5,741.2 720.5,735.6 730.5,738.7 740.5,740.6 750.5,739.7 760.5,737.8 770.5,737.4 780.5,736.5 790.5,739.7 800.5,742.5 810.5,741.5 820.5,741.0 830.5,742.5 840.5,743.4 850.5,745.6 860.5,748.4 870.5,748.6 880.5,749.5 890.5,747.7 900.5,747.5 910.5,748.6 920.5,753.6 930.5,758.3 940.5,762.9 950.5,766.6 960.5,767.5 970.5,767.5 980.5,766.6 990.5,764.2 1000.5,762.0 1010.5,761.0 1020.5,760.7 1030.5,758.3 1040.5,755.5 1050.5,752.7 1060.5,749.5 1070.5,747.1 1080.5,741.5 1090.5,736.9 1670.5,779.0 1680.5,772.0 1690.5,765.8"/>
<polyline stroke="#00FF00" points="10.5,808.4 20.5,809.7 30.5,802.5 40.5,799.5 50.5,801.4 60.5,803.8 70.5,800.6 80.5,795.4 90.5,796.7 100.5,798.8 110.5,800.6 120.5,802.5 130.5,793.2 140.5,783.9 150.5,774.6 160.5,770.3 170.5,768.5 180.5,766.6 190.5,765.3 200.5,759.6 210.5,757.5 220.5,761.6 230.5,762.5 240.5,762.3 250.5,748.6 260.5,750.4 270.5,753.6 280.5,758.6 290.5,757.5 300.5,761.0 310.5,745.2 320.5,728.1 330.5,724.8 340.5,728.5 350.5,733.2 360.5,740.6 370.5,736.5 380.5,742.5 390.5,732.6 400.5,724.8 410.5,723.9 420.5,732.2 430.5,741.0 440.5,734.5 450.5,732.6 460.5,743.4 470.5,751.7 480.5,737.4 490.5,736.9 500.5,743.4 510.5,744.7 520.5,749.9 530.5,752.3 540.5,737.8 550.5,735.0 560.5,734.5 570.5,740.6 580.5,751.7 590.5,759.2 600.5,765.3 610.5,769.4 620.5,756.0 630.5,759.2 640.5,742.5 650.5,730.7 660.5,728.5 670.5,724.8 680.5,727.6 690.5,726.3 700.5,713.6 710.5,716.4 720.5,724.8 730.5,755.5 740.5,765.7 750.5,774.1 760.5,780.6 770.5,775.5 780.5,779.6 790.5,760.7 800.5,762.5 810.5,770.3 820.5,776.5 830.5,765.7 840.5,770.3 850.5,767.0 860.5,766.6 870.5,772.8 880.5,775.5 890.5,780.6 900.5,777.8 910.5,772.2 920.5,754.2 930.5,743.4 940.5,745.6 950.5,750.8 960.5,736.5 970.5,739.7 980.5,732.2 990.5,721.6 1000.5,728.1 1010.5,734.1 1020.5,735.4 1030.5,733.7 1040.5,730.4 1050.5,729.4 1060.5,729.4 1070.5,731.7 1080.5,722.0 1090.5,715.5 1670.5,729.0 1680.5,723.0 1690.5,729.0"/>
<polyline stroke="#FF00FF" points="10.5,735.6 20.5,737.4 30.5,743.4 40.5,747.5 50.5,735.6 60.5,739.3 70.5,745.6 80.5,751.7 90.5,756.8 100.5,749.0 110.5,743.4 120.5,733.2 130.5,742.5 140.5,747.5 150.5,752.7 160.5,758.3 170.5,762.0 180.5,764.8 190.5,768.5 200.5,772.2 210.5,775.9 220.5,768.5 230.5,772.2 240.5,777.4 250.5,781.5 260.5,783.9 270.5,777.8 280.5,772.8 290.5,775.9 300.5,763.8 310.5,772.8 320.5,776.8 330.5,779.6 340.5,781.5 350.5,781.5 360.5,776.8 370.5,780.6 380.5,774.6 390.5,778.3 400.5,780.9 410.5,785.8 420.5,775.9 430.5,779.6 440.5,782.4 450.5,785.8 460.5,768.5 470.5,772.2 480.5,775.9 490.5,778.7 500.5,771.8 510.5,775.9 520.5,778.7 530.5,781.5 540.5,785.8 550.5,786.7 560.5,788.9 570.5,784.3 580.5,767.5 590.5,751.7 600.5,750.4 610.5,756.0 620.5,761.0 630.5,765.3 640.5,770.9 650.5,774.1 660.5,777.8 670.5,780.6 680.5,783.3 690.5,785.2 700.5,788.0 710.5,792.1 720.5,796.4 730.5,721.1 740.5,734.6 750.5,717.4 760.5,725.2 770.5,732.2 780.5,723.5 790.5,731.3 800.5,741.0 810.5,715.1 820.5,725.7 830.5,731.7 840.5,733.2 850.5,738.7 860.5,743.4 870.5,734.6 880.5,738.4 890.5,729.8 900.5,738.7 910.5,741.5 920.5,747.1 930.5,754.2 940.5,757.3 950.5,757.0 960.5,763.5 970.5,767.5 980.5,769.0 990.5,775.0 1000.5,778.7 1010.5,770.9 1020.5,775.0 1030.5,779.6 1040.5,781.5 1050.5,782.4 1060.5,784.3 1070.5,786.1 1080.5,788.9 1090.5,792.6 1670.5,783.6 1680.5,787.0 1690.5,790.0"/>
</g>
<path d="M1708 83 L1714 77 H1757 V89 H1714 Z" fill="#000"/><text x="1716" y="87" fill="#fff">2713.00</text>
<path d="M1708 95.5 L1714 89.5 H1757 V101.5 H1714 Z" fill="#0000FF"/><text x="1716" y="99.5" fill="#fff">2673.63</text>
<path d="M1708 729 L1714 723 H1745 V735 H1714 Z" fill="#00FF00" stroke="#000" stroke-width="1"/><text x="1716" y="733" fill="#000">29.34</text>
<path d="M1708 765 L1714 759 H1745 V771 H1714 Z" fill="#FFFF00" stroke="#000" stroke-width="1"/><text x="1716" y="769" fill="#000">19.55</text>
<path d="M1708 789.5 L1714 783.5 H1745 V795.5 H1714 Z" fill="#FF00FF" stroke="#000" stroke-width="1"/><text x="1716" y="793.5" fill="#fff">12.81</text>
</svg>
<div id="title" class="abs"><span style="position:absolute;left:19px;top:1px">NQ 03-12 (Weekly)  Week 51/2008 - Week 11/2012</span></div>
<div id="toolbar" class="abs"></div>
<svg class="abs" style="left:0;top:0" width="1768" height="46" viewBox="0 0 1768 46" font-family="Liberation Sans, sans-serif">
<!-- rounded toolbar corners -->
<path d="M0 18h3q-3 0-3 3zM0 44v-3q0 3 3 3z" fill="#91BE90"/>
<path d="M1768 18v26h-3q2 0 2-2v-22q0-2-2-2z" fill="#91BE90"/><path d="M1767.500 20v22" stroke="#9A9E9A" stroke-width="1"/>
<!-- title icon -->
<rect x="3.500" y="2.500" width="13" height="13" fill="#E4ECF8" stroke="#7F92B8"/>
<path d="M4 7.500h12M4 11.500h12M8.500 3v12M12.500 3v12" stroke="#B8C6E0" stroke-width="1"/>
<path d="M4 11l3-3 2 2 3-5 2 2 2-3" fill="none" stroke="#18A028" stroke-width="1.600"/>
<path d="M4 14l3-2 2-3 3 1 4-5" fill="none" stroke="#2850D0" stroke-width="1.200"/>
<!-- title buttons -->
<g shape-rendering="crispEdges">
<rect x="1700" y="4" width="10" height="10" fill="#D4D0C8"/>
<rect x="1716" y="2" width="15" height="13" fill="#D4D0C8"/><path d="M1716 15V2h15" fill="none" stroke="#fff"/><path d="M1716.500 15.500h15V2" fill="none" stroke="#404040"/>
<rect x="1732" y="2" width="15" height="13" fill="#D4D0C8"/><path d="M1732 15V2h15" fill="none" stroke="#fff"/><path d="M1732.500 15.500h15V2" fill="none" stroke="#404040"/>
<rect x="1750" y="2" width="15" height="13" fill="#D4D0C8"/><path d="M1750 15V2h15" fill="none" stroke="#fff"/><path d="M1750.500 15.500h15V2" fill="none" stroke="#404040"/>
<rect x="1720" y="11" width="6" height="2" fill="#000"/>
<path d="M1738.500 5.500h5v4h-5zM1738 6.500h6M1736.500 8.500h5v4h-5zM1736 9.500h6" fill="none" stroke="#000"/>
</g>
<path d="M1703.500 5v7.500h4.500" fill="none" stroke="#000" stroke-width="1.200"/>
<path d="M1754 5l7 7M1761 5l-7 7" stroke="#000" stroke-width="1.700"/>
<!-- grip + separators -->
<g fill="#A8A4A0"><rect x="2" y="24" width="2" height="2"/><rect x="2" y="28" width="2" height="2"/><rect x="2" y="32" width="2" height="2"/><rect x="2" y="36" width="2" height="2"/></g>
<g shape-rendering="crispEdges"><path d="M10.500 24v15M137.500 24v15M247.500 24v15M305.500 24v15" stroke="#A8A4A0"/><path d="M11.500 25v15M138.500 25v15M248.500 25v15M306.500 25v15" stroke="#fff"/></g>
<text x="17" y="35" font-size="10.700">NQ 03-12</text>
<text x="84" y="35" font-size="10.700">Weekly</text>
<g fill="#000"><path d="M69.500 30h6l-3 3.500zM124.500 30h6l-3 3.500zM160 30h6l-3 3.500zM189 30h6l-3 3.500zM270 30h6l-3 3.500z"/></g>
<!-- candles icon -->
<g stroke-linecap="round"><path d="M145 24.500v13.500M150 23.500v13.500M155 24.500v14" stroke="#111" stroke-width="2"/>
<rect x="143.200" y="26" width="3.600" height="10" rx="1.200" fill="#5BE02A"/><rect x="148.200" y="25.200" width="3.600" height="10" rx="1.200" fill="#5BE02A"/><rect x="153.200" y="26" width="3.600" height="10" rx="1.200" fill="#F0392E"/>
<path d="M144.300 27v8M149.300 26.200v8" stroke="#B6F59A" stroke-width=".8"/><path d="M154.300 27v8" stroke="#FBA59E" stroke-width=".8"/></g>
<!-- pencil -->
<g><path d="M172 38L174 33.500L176.600 36.300Z" fill="#B79A74"/><path d="M174 33.500L182.400 25.600L185 28.400L176.600 36.300Z" fill="#F7D421" stroke="#C9A30E" stroke-width=".5"/><path d="M182.400 25.600L184.550 23.560Q186.500 23.300 187.150 26.340L185 28.400Z" fill="#F0606A"/><path d="M172 38l.5-1.400 1 1z" fill="#333"/></g>
<!-- magnifier plus -->
<g><path d="M204.800 34.800l-3.300 3.400" stroke="#555" stroke-width="2" stroke-linecap="round"/><circle cx="207.700" cy="31.500" r="4" fill="#9CCBF2" stroke="#A9A9A9" stroke-width="1.500"/><circle cx="206.700" cy="30.500" r="1.700" fill="#D4ECFB"/><path d="M211 27h6M214 24v6" stroke="#17B52A" stroke-width="2"/></g>
<!-- magnifier minus (disabled) -->
<g><path d="M228.800 34.800l-3.800 3.600" stroke="#BDBDBD" stroke-width="2" stroke-linecap="round"/><circle cx="231.800" cy="31.500" r="4.300" fill="#DCDCDC" stroke="#C4C4C4" stroke-width="1.300"/><path d="M235 26.500h5" stroke="#BDBDBD" stroke-width="1.600"/></g>
<!-- cursor -->
<path d="M253.500 25.600L261.300 27.200L259.100 30.100L265.600 36.600L264 38.200L257.500 31.700L255 33.500Z" fill="#fff" stroke="#333" stroke-width="1" stroke-linejoin="round"/>
<!-- zoom box -->
<g><rect x="283.500" y="23.500" width="13" height="15" fill="#fff" stroke="#8A8A8A"/><path d="M286.500 34.500l-4 4" stroke="#444" stroke-width="2" stroke-linecap="round"/><circle cx="289.600" cy="31.200" r="4.200" fill="#9CCBF2" stroke="#B5B5B5" stroke-width="1.500"/><circle cx="288.800" cy="30.400" r="1.800" fill="#D4ECFB"/></g>
<!-- bars icon -->
<g><path d="M314 28.500h12M314 30.500h12M314 36.500h6" stroke="#DADADA" stroke-width="1"/><path d="M311.200 24h5.500l2 1.300-2 1.300h-5.500z" fill="#3FE01E"/><path d="M311.200 31.600h5.500l2 1.300-2 1.300h-5.500z" fill="#F0281E"/><rect x="320" y="25.300" width="2.800" height="13.500" fill="#54E02A" stroke="#1E8A10" stroke-width=".5"/><rect x="323.700" y="33.300" width="2.300" height="5.500" fill="#F0392E" stroke="#A01810" stroke-width=".5"/><circle cx="321.400" cy="25.300" r="1" fill="#111"/><circle cx="324.800" cy="33" r=".9" fill="#111"/></g>
<!-- candle chart box -->
<g><rect x="334.500" y="23.500" width="15" height="15" fill="#F4F4F4" stroke="#8A8A8A"/><path d="M335 27.500h14M335 30.500h14M335 33.500h14M335 36.500h14" stroke="#C8C8C8" stroke-width=".7"/><path d="M337.700 25.500v12M342 24.500v10M346.600 27v11" stroke="#111" stroke-width="1.500" stroke-linecap="round"/><rect x="336.200" y="26.500" width="3" height="9.500" rx="1" fill="#4FE024"/><rect x="340.500" y="25.300" width="3" height="8" rx="1" fill="#4FE024"/><rect x="345.100" y="28.300" width="3" height="8" rx="1" fill="#F0392E"/></g>
<!-- line chart box -->
<g><rect x="357.500" y="23.500" width="15" height="15" fill="#F2F2F2" stroke="#8A8A8A"/><rect x="358" y="34" width="14" height="4" fill="#C9C9C9"/><path d="M359 33l2-4 1.500 2.500 2.500-4 2.500 1.300 2-.5 2 3V38H359z" fill="#DEDEDE"/><path d="M359.500 28.200l1.300-1.700 1.700 2.500 2.500-3.800 2.600 1.300 1.700-.5 1.700 2.600" fill="none" stroke="#2FA86A" stroke-width="1"/><path d="M359.500 32.400l1.300 1.300 2.600-2.100 1.600-1.300 1.800.8 1.600-.4 2.600 3" fill="none" stroke="#E8303A" stroke-width="1"/></g>
<!-- dollar page -->
<g><path d="M382.500 24.500h8l3 3v10h-11z" fill="#fff" stroke="#8A8A8A"/><path d="M390.500 24.500v3h3" fill="none" stroke="#8A8A8A" stroke-width=".8"/><text x="388" y="35.500" font-size="11.500" font-weight="bold" fill="#1E9E32" text-anchor="middle">$</text></g>
<!-- table icon -->
<g><rect x="404.500" y="23.500" width="13" height="15" fill="#F4F2FB" stroke="#8A8A8A"/><rect x="406.200" y="25.200" width="9.800" height="2.600" fill="#3AA4E6"/><rect x="406.200" y="29.500" width="2.500" height="7.200" fill="#9A5CF2"/><path d="M410 30.500h6M410 32.500h6M410 34.500h6M410 36.500h6" stroke="#CFCBEA" stroke-width="1"/></g>
</svg>

<div class="abs" style="left:1088px;top:307px;width:578px;height:675px;background:#D4D0C8;border:1px solid;border-color:#D4D0C8 #404040 #404040 #D4D0C8;box-shadow:inset 1px 1px 0 #fff,inset -1px -1px 0 #808080"></div>
<div class="abs" style="left:1092px;top:311px;width:570px;height:16px;background:#0A246A;color:#fff;font-family:'DejaVu Sans Condensed','Liberation Sans',sans-serif;font-weight:bold;font-size:11.3px;line-height:15px"><span class="abs" style="left:2px;top:1px">Indicators</span><div class="abs btn" style="left:557px;top:2px;width:12px;height:11px"><svg class="abs" style="left:1px;top:1px" width="8" height="7" viewBox="0 0 8 7"><path d="M1 0.500L7 6.500M7 0.500L1 6.500" stroke="#000" stroke-width="1.300"/></svg></div></div>
<div class="abs" style="left:1092px;top:328px;width:570px;height:584px;border:1px solid;border-color:#808080 #fff #fff #808080"></div>
<div class="abs" style="left:1094px;top:329px;width:275px;height:343px;background:#fff;border:1px solid;border-color:#808080 #fff #fff #808080;box-shadow:inset 1px 1px 0 #404040,inset -1px -1px 0 #D4D0C8"></div>
<div class="abs" style="left:1098px;top:332px;width:280px;font-size:12.3px;line-height:13px;white-space:nowrap;transform:scaleX(.875);transform-origin:0 0">
<div>MFI</div>
<div>MIN</div>
<div>Momentum</div>
<div>NBarsDown</div>
<div>NBarsUp</div>
<div>OBV</div>
<div>ParabolicSAR</div>
<div>PBF_2EMA_Color</div>
<div>PBF_B_S_Pressure</div>
<div>PBF_CCI</div>
<div>PBF_DMI_ADX</div>
<div>PBF_Fast_3MAs</div>
<div>PBF_Function_NLR</div>
<div>PBF_HeatMeter</div>
<div>PBF_iTunnel</div>
<div>PBF_Momentum</div>
<div>PBF_OSOB</div>
<div>PBF_PB_Direction</div>
<div>PBF_PB_Entry</div>
<div>PBF_RSI</div>
<div>PBF_Scalper_Show_Me</div>
<div>PBF_Show_Me_Dots</div>
<div>PBF_Squeeze</div>
<div>PBF_Trend_Bars_v2</div>
<div>PFE</div>
<div>Pivots</div>
</div>
<div class="abs" style="left:1351px;top:331px;width:16px;height:339px;background:repeating-conic-gradient(#fff 0% 25%,#D4D0C8 0% 50%) 0 0/2px 2px"></div>
<div class="abs btn" style="left:1351px;top:331px;width:16px;height:16px"><svg class="abs" style="left:3px;top:4px" width="8" height="5" viewBox="0 0 8 5"><path d="M0 4.500h7L3.500 .5z" fill="#000"/></svg></div>
<div class="abs btn" style="left:1351px;top:473px;width:16px;height:66px"></div>
<div class="abs btn" style="left:1351px;top:654px;width:16px;height:16px"><svg class="abs" style="left:3px;top:5px" width="8" height="5" viewBox="0 0 8 5"><path d="M0 .5h7L3.500 4.500z" fill="#000"/></svg></div>
<div class="abs" style="left:1094px;top:675px;width:275px;height:199px;background:#fff;border:1px solid;border-color:#808080 #fff #fff #808080;box-shadow:inset 1px 1px 0 #404040,inset -1px -1px 0 #D4D0C8"></div>
<div class="abs" style="left:1096px;top:703px;width:271px;height:13px;background:#0A246A"></div>
<div class="abs" style="left:1096px;top:678px;width:315.1px;font-size:12.3px;line-height:13px;white-space:nowrap;overflow:hidden;transform:scaleX(.86);transform-origin:0 0"><div style="padding-left:2px">PBF_DMI_ADX(NQ 03-12 (Weekly),14)</div><div style="padding-left:2px">PBF_Fast_3MAs(NQ 03-12 (Weekly),2,13,17,True,False)</div><div style="padding-left:2px;color:#fff">PBF_Function_NLR(NQ 03-12 (Weekly),1,5)</div></div>
<div class="abs btn" style="left:1118px;top:880px;width:68px;height:25px;line-height:22px;color:#808080;text-shadow:1px 1px 0 #fff"><span style="display:inline-block;font-size:12.3px;transform:scaleX(.875)">New</span></div>
<div class="abs btn" style="left:1275px;top:880px;width:68px;height:25px;line-height:22px"><span style="display:inline-block;font-size:12.3px;transform:scaleX(.875)">Remove</span></div>
<div class="abs" style="left:1377px;top:329px;width:283px;height:521px;background:#fff;border:1px solid;border-color:#808080 #fff #fff #808080"></div>
<div class="abs" style="left:1378px;top:330px;width:281px;height:519px;overflow:hidden;font-size:12.3px;line-height:17px;white-space:nowrap">
<div class="abs" style="left:0;top:0;width:14px;height:288px;background:#D4D0C8"></div><div class="abs" style="left:0;top:0;width:281px;height:1px;background:#D4D0C8"></div>
<div class="abs" style="left:0;top:1px;width:281px;height:16px;background:#D4D0C8"><svg class="abs" style="left:2px;top:3px" width="9" height="9" viewBox="0 0 9 9"><rect x=".5" y=".5" width="8" height="8" fill="#fff" stroke="#000"/><path d="M2 4.500h5" stroke="#000"/></svg><span class="abs" style="left:17px;top:0;font-family:'DejaVu Sans Condensed','Liberation Sans',sans-serif;font-weight:bold;font-size:11.1px">Parameters</span></div>
<div class="abs" style="left:14px;top:17px;width:267px;height:16px;background:#D4D0C8"></div>
<div class="abs" style="left:14px;top:17px;width:119px;height:15px;background:#fff;color:#000;overflow:hidden"><span class="abs" style="left:3px;top:0;transform:scaleX(.875);transform-origin:0 0">DesiredBar</span></div>
<div class="abs" style="left:134px;top:17px;width:147px;height:15px;background:#fff;color:#000"><span class="abs" style="left:3px;top:0;font-family:'DejaVu Sans Condensed','Liberation Sans',sans-serif;font-weight:bold;font-size:11.1px">1</span></div>
<div class="abs" style="left:14px;top:33px;width:267px;height:16px;background:#D4D0C8"></div>
<div class="abs" style="left:14px;top:33px;width:119px;height:15px;background:#fff;color:#000;overflow:hidden"><span class="abs" style="left:3px;top:0;transform:scaleX(.875);transform-origin:0 0">Length</span></div>
<div class="abs" style="left:134px;top:33px;width:147px;height:15px;background:#fff;color:#000"><span class="abs" style="left:3px;top:0;font-family:'DejaVu Sans Condensed','Liberation Sans',sans-serif;font-weight:bold;font-size:11.1px">5</span></div>
<div class="abs" style="left:0;top:49px;width:281px;height:16px;background:#D4D0C8"><svg class="abs" style="left:2px;top:3px" width="9" height="9" viewBox="0 0 9 9"><rect x=".5" y=".5" width="8" height="8" fill="#fff" stroke="#000"/><path d="M2 4.500h5" stroke="#000"/></svg><span class="abs" style="left:17px;top:0;font-family:'DejaVu Sans Condensed','Liberation Sans',sans-serif;font-weight:bold;font-size:11.1px">Data</span></div>
<div class="abs" style="left:14px;top:65px;width:267px;height:16px;background:#D4D0C8"></div>
<div class="abs" style="left:14px;top:65px;width:119px;height:15px;background:#fff;color:#000;overflow:hidden"><span class="abs" style="left:3px;top:0;transform:scaleX(.875);transform-origin:0 0">Calculate on bar close</span></div>
<div class="abs" style="left:134px;top:65px;width:147px;height:15px;background:#fff;color:#000"><span class="abs" style="left:3px;top:0;font-family:'DejaVu Sans Condensed','Liberation Sans',sans-serif;font-weight:bold;font-size:11.1px">True</span></div>
<div class="abs" style="left:14px;top:81px;width:267px;height:16px;background:#D4D0C8"></div>
<div class="abs" style="left:14px;top:81px;width:119px;height:15px;background:#fff;color:#000;overflow:hidden"><span class="abs" style="left:3px;top:0;transform:scaleX(.875);transform-origin:0 0">Input series</span></div>
<div class="abs" style="left:134px;top:81px;width:147px;height:15px;background:#fff;color:#000"><span class="abs" style="left:3px;top:0;font-family:'DejaVu Sans Condensed','Liberation Sans',sans-serif;font-weight:bold;font-size:11.1px">NQ 03-12 (Weekly)</span></div>
<div class="abs" style="left:14px;top:97px;width:267px;height:16px;background:#D4D0C8"></div>
<div class="abs" style="left:14px;top:97px;width:119px;height:15px;background:#fff;color:#000;overflow:hidden"><span class="abs" style="left:3px;top:0;transform:scaleX(.875);transform-origin:0 0">Maximum bars look back</span></div>
<div class="abs" style="left:134px;top:97px;width:147px;height:15px;background:#fff;color:#000"><span class="abs" style="left:3px;top:0;font-family:'DejaVu Sans Condensed','Liberation Sans',sans-serif;font-weight:bold;font-size:11.1px">TwoHundredFiftySix</span></div>
<div class="abs" style="left:0;top:113px;width:281px;height:16px;background:#D4D0C8"><svg class="abs" style="left:2px;top:3px" width="9" height="9" viewBox="0 0 9 9"><rect x=".5" y=".5" width="8" height="8" fill="#fff" stroke="#000"/><path d="M2 4.500h5" stroke="#000"/></svg><span class="abs" style="left:17px;top:0;font-family:'DejaVu Sans Condensed','Liberation Sans',sans-serif;font-weight:bold;font-size:11.1px">Visual</span></div>
<div class="abs" style="left:14px;top:129px;width:267px;height:16px;background:#D4D0C8"></div>
<div class="abs" style="left:14px;top:129px;width:119px;height:15px;background:#fff;color:#808080;overflow:hidden"><span class="abs" style="left:3px;top:0;transform:scaleX(.875);transform-origin:0 0">Auto scale</span></div>
<div class="abs" style="left:134px;top:129px;width:147px;height:15px;background:#fff;color:#808080"><span class="abs" style="left:3px;top:0;font-family:'DejaVu Sans Condensed','Liberation Sans',sans-serif;font-weight:bold;font-size:11.1px">True</span></div>
<div class="abs" style="left:14px;top:145px;width:267px;height:16px;background:#D4D0C8"></div>
<div class="abs" style="left:14px;top:145px;width:119px;height:15px;background:#fff;color:#000;overflow:hidden"><span class="abs" style="left:3px;top:0;transform:scaleX(.875);transform-origin:0 0">Displacement</span></div>
<div class="abs" style="left:134px;top:145px;width:147px;height:15px;background:#fff;color:#000"><span class="abs" style="left:3px;top:0;font-family:'DejaVu Sans Condensed','Liberation Sans',sans-serif;font-weight:bold;font-size:11.1px">0</span></div>
<div class="abs" style="left:14px;top:161px;width:267px;height:16px;background:#D4D0C8"></div>
<div class="abs" style="left:14px;top:161px;width:119px;height:15px;background:#fff;color:#000;overflow:hidden"><span class="abs" style="left:3px;top:0;transform:scaleX(.875);transform-origin:0 0">Display in Data Box</span></div>
<div class="abs" style="left:134px;top:161px;width:147px;height:15px;background:#fff;color:#000"><span class="abs" style="left:3px;top:0;font-family:'DejaVu Sans Condensed','Liberation Sans',sans-serif;font-weight:bold;font-size:11.1px">True</span></div>
<div class="abs" style="left:14px;top:177px;width:267px;height:16px;background:#D4D0C8"></div>
<div class="abs" style="left:14px;top:177px;width:119px;height:15px;background:#D4D0C8;color:#000;overflow:hidden"><span class="abs" style="left:3px;top:0;transform:scaleX(.875);transform-origin:0 0">Label</span></div>
<div class="abs" style="left:134px;top:177px;width:147px;height:15px;background:#fff;color:#000"><span class="abs" style="left:3px;top:0;font-family:'DejaVu Sans Condensed','Liberation Sans',sans-serif;font-weight:bold;font-size:11.1px">PBF_Function_NLR</span></div>
<div class="abs" style="left:14px;top:193px;width:267px;height:16px;background:#D4D0C8"></div>
<div class="abs" style="left:14px;top:193px;width:119px;height:15px;background:#fff;color:#000;overflow:hidden"><span class="abs" style="left:3px;top:0;transform:scaleX(.875);transform-origin:0 0">Panel</span></div>
<div class="abs" style="left:134px;top:193px;width:147px;height:15px;background:#fff;color:#000"><span class="abs" style="left:3px;top:0;font-family:'DejaVu Sans Condensed','Liberation Sans',sans-serif;font-weight:bold;font-size:11.1px">3</span></div>
<div class="abs" style="left:14px;top:209px;width:267px;height:16px;background:#D4D0C8"></div>
<div class="abs" style="left:14px;top:209px;width:119px;height:15px;background:#fff;color:#000;overflow:hidden"><span class="abs" style="left:3px;top:0;transform:scaleX(.875);transform-origin:0 0">Price marker(s)</span></div>
<div class="abs" style="left:134px;top:209px;width:147px;height:15px;background:#fff;color:#000"><span class="abs" style="left:3px;top:0;font-family:'DejaVu Sans Condensed','Liberation Sans',sans-serif;font-weight:bold;font-size:11.1px">True</span></div>
<div class="abs" style="left:14px;top:225px;width:267px;height:16px;background:#D4D0C8"></div>
<div class="abs" style="left:14px;top:225px;width:119px;height:15px;background:#fff;color:#000;overflow:hidden"><span class="abs" style="left:3px;top:0;transform:scaleX(.875);transform-origin:0 0">Scale justification</span></div>
<div class="abs" style="left:134px;top:225px;width:147px;height:15px;background:#fff;color:#000"><span class="abs" style="left:3px;top:0;font-family:'DejaVu Sans Condensed','Liberation Sans',sans-serif;font-weight:bold;font-size:11.1px">Right</span></div>
<div class="abs" style="left:0;top:241px;width:281px;height:16px;background:#D4D0C8"><svg class="abs" style="left:2px;top:3px" width="9" height="9" viewBox="0 0 9 9"><rect x=".5" y=".5" width="8" height="8" fill="#fff" stroke="#000"/><path d="M2 4.500h5" stroke="#000"/></svg><span class="abs" style="left:17px;top:0;font-family:'DejaVu Sans Condensed','Liberation Sans',sans-serif;font-weight:bold;font-size:11.1px">Plots</span></div>
<div class="abs" style="left:14px;top:257px;width:267px;height:16px;background:#D4D0C8"></div>
<div class="abs" style="left:14px;top:257px;width:119px;height:15px;background:#fff;color:#000;overflow:hidden"><span class="abs" style="left:3px;top:0;transform:scaleX(.875);transform-origin:0 0">oNLRPrice</span></div>
<svg class="abs" style="left:2px;top:260px" width="9" height="9" viewBox="0 0 9 9"><rect x=".5" y=".5" width="8" height="8" fill="#fff" stroke="#000"/><path d="M2 4.500h5M4.500 2v5" stroke="#000"/></svg>
<div class="abs" style="left:134px;top:257px;width:147px;height:15px;background:#fff"><div class="abs" style="left:1px;top:1px;width:20px;height:12px;border:1px solid #000;background:#fff"></div><span class="abs" style="left:29px;top:0;font-family:'DejaVu Sans Condensed','Liberation Sans',sans-serif;font-weight:bold;font-size:11.1px">Line; Solid; 1px</span></div>
<div class="abs" style="left:14px;top:273px;width:267px;height:16px;background:#D4D0C8"></div>
<div class="abs" style="left:14px;top:273px;width:119px;height:15px;background:#fff;color:#000;overflow:hidden"><span class="abs" style="left:3px;top:0;transform:scaleX(.875);transform-origin:0 0">oStdDev</span></div>
<svg class="abs" style="left:2px;top:276px" width="9" height="9" viewBox="0 0 9 9"><rect x=".5" y=".5" width="8" height="8" fill="#fff" stroke="#000"/><path d="M2 4.500h5M4.500 2v5" stroke="#000"/></svg>
<div class="abs" style="left:134px;top:273px;width:147px;height:15px;background:#fff"><div class="abs" style="left:1px;top:1px;width:20px;height:12px;border:1px solid #000;background:#fff"></div><span class="abs" style="left:29px;top:0;font-family:'DejaVu Sans Condensed','Liberation Sans',sans-serif;font-weight:bold;font-size:11.1px">Line; Solid; 1px</span></div>
</div>
<div class="abs" style="left:1377px;top:853px;width:283px;height:58px;background:#D4D0C8;border:1px solid;border-color:#808080 #fff #fff #808080"><span class="abs" style="left:4px;top:1px;font-family:'DejaVu Sans Condensed','Liberation Sans',sans-serif;font-weight:bold;font-size:11.1px">Label</span></div>
<div class="abs btn" style="left:1180px;top:941px;width:81px;height:25px;line-height:22px"><span style="display:inline-block;font-size:12.3px;transform:scaleX(.875)">OK</span></div>
<div class="abs" style="left:1337px;top:941px;width:81px;height:25px;border:1px solid #000"><div class="btn" style="width:79px;height:23px;line-height:20px"><span style="display:inline-block;font-size:12.3px;transform:scaleX(.875)">Apply</span></div></div>
<div class="abs btn" style="left:1494px;top:941px;width:81px;height:25px;line-height:22px"><span style="display:inline-block;font-size:12.3px;transform:scaleX(.875)">Close</span></div>
<svg class="abs" style="left:1648px;top:965px" width="14" height="14" viewBox="0 0 14 14"><path d="M13 2L2 13M13 6L6 13M13 10L10 13" stroke="#808080" stroke-width="1.500"/><path d="M13 1L1 13M13 5L5 13M13 9L9 13" stroke="#fff" stroke-width="1"/></svg>
<div class="abs" style="left:986px;top:689px;width:432px;height:162px;background:rgba(255,255,255,.5);border:1px solid rgba(40,40,40,.7);font-family:'DejaVu Sans',sans-serif;font-weight:bold;font-style:italic;font-size:17px;letter-spacing:.1px;color:rgba(0,0,0,.6);white-space:nowrap"><span class="abs" style="left:30px;top:24px">www.trading-software-collection.com</span><span class="abs" style="left:100px;top:70px">andreybbrv@gmail.com</span><span class="abs" style="left:126px;top:116px">skype: andreybbrv</span></div>
<div class="abs" style="left:0;top:1022px;width:1768px;height:23px;background:repeating-conic-gradient(#fff 0% 25%,#D4D0C8 0% 50%) 0 0/2px 2px"></div>
<div class="abs btn" style="left:0;top:1022px;width:16px;height:23px"><svg width="14" height="21" viewBox="0 0 14 21"><path d="M9 6.5v8L5 10.5z" fill="#000"/></svg></div>
<div class="abs btn" style="left:486px;top:1022px;width:1265px;height:23px"></div>
<div class="abs btn" style="left:1751px;top:1022px;width:17px;height:23px"><svg width="15" height="21" viewBox="0 0 15 21"><path d="M6 6.5v8l4-4z" fill="#000"/></svg></div>
<div class="abs" style="left:0;top:1045px;width:1768px;height:31px;background:#D4D0C8;border-top:1px solid #D4D0C8;box-shadow:inset 0 2px 0 -0px #fff"></div>
<div class="abs" style="left:0;top:1045px;width:1768px;height:1px;background:#D4D0C8"></div>
<div class="abs" style="left:0;top:1046px;width:1768px;height:1px;background:#fff"></div>
<div class="abs tb" style="left:2px;width:52px;font-weight:bold;font-family:'DejaVu Sans Condensed','Liberation Sans',sans-serif;font-size:11.2px"><svg class="abs" style="left:2px;top:2px" width="16" height="16" viewBox="0 0 16 16"><path d="M1 3.5q3-2 6-.3l-.9 5q-3-1.600-6 .3z" fill="#E8502A"/><path d="M8 3.6q3 1.500 6-.5l-.9 5q-3 2-6 .5z" fill="#7DBB3C"/><path d="M-.2 9.600q3-2 6-.3l-.9 5q-3-1.600-6 .3z" fill="#3A7BD5"/><path d="M6.800 9.800q3 1.500 6-.5l-.9 5q-3 2-6 .5z" fill="#F2C12E"/></svg><span class="abs" style="left:19px;top:0">Start</span></div>
<div class="abs tb" style="left:59px;width:160px"><svg class="abs" style="left:3px;top:2px" width="16" height="16" viewBox="0 0 16 16"><path d="M1 1h12l2 2v12H1z" fill="#1A3FD0"/><rect x="4" y="1" width="8" height="5" fill="#fff"/><rect x="9" y="2" width="2" height="3" fill="#1A3FD0"/><rect x="3" y="8" width="10" height="7" fill="#fff"/><rect x="3" y="10" width="10" height="1.500" fill="#E0203A"/><rect x="3" y="13" width="10" height="1.500" fill="#E0203A"/></svg><span class="abs" style="left:23px;top:0">Total Commander 7.03 - ...</span></div>
<div class="abs tb" style="left:222px;width:160px"><svg class="abs" style="left:4px;top:3px" width="16" height="14" viewBox="0 0 16 14"><path d="M.9 8.800Q1.500 3.200 4.600 2.700Q6.200 4 7.600 11" fill="none" stroke="#A38E86" stroke-width="2"/><path d="M7.200 4L9.600 11.300L13.300 6.800" fill="none" stroke="#CC2229" stroke-width="2.200" stroke-linejoin="round"/><path d="M10.300 2.800Q13.600 3.200 13.500 7.200" fill="none" stroke="#D4484E" stroke-width="1.100"/></svg><span class="abs" style="left:23px;top:0">Control Center - Untitled1</span></div>
<div class="abs tb" style="left:385px;width:160px"><svg class="abs" style="left:4px;top:3px" width="15" height="14" viewBox="0 0 15 14"><rect x=".5" y=".5" width="14" height="13" fill="#E8EEF8" stroke="#8090B0"/><path d="M1 11l3-5 2 2 3-5 2 2 3-3" fill="none" stroke="#1E9E2A" stroke-width="1.600"/><path d="M1 12l4-3 3 1 5-6" fill="none" stroke="#2A56D8" stroke-width="1.200"/></svg><span class="abs" style="left:23px;top:0;white-space:pre">NQ 03-12 (Weekly)  Wee...</span></div>
<div class="abs tb" style="left:548px;width:160px;border-color:#404040 #fff #fff #404040;box-shadow:inset 1px 1px 0 #808080;background:repeating-conic-gradient(#fff 0% 25%,#D4D0C8 0% 50%) 0 0/2px 2px;font-weight:bold;font-family:'DejaVu Sans Condensed','Liberation Sans',sans-serif"><svg class="abs" style="left:5px;top:4px" width="16" height="14" viewBox="0 0 16 14"><path d="M.9 8.800Q1.500 3.200 4.600 2.700Q6.200 4 7.600 11" fill="none" stroke="#A38E86" stroke-width="2"/><path d="M7.200 4L9.600 11.300L13.300 6.800" fill="none" stroke="#CC2229" stroke-width="2.200" stroke-linejoin="round"/><path d="M10.300 2.800Q13.600 3.200 13.500 7.200" fill="none" stroke="#D4484E" stroke-width="1.100"/></svg><span class="abs" style="left:24px;top:1px">Indicators</span></div>
<div class="abs tb" style="left:711px;width:160px"><svg class="abs" style="left:4px;top:3px" width="16" height="14" viewBox="0 0 16 14"><path d="M.9 8.800Q1.500 3.200 4.600 2.700Q6.200 4 7.600 11" fill="none" stroke="#A38E86" stroke-width="2"/><path d="M7.200 4L9.600 11.300L13.300 6.800" fill="none" stroke="#CC2229" stroke-width="2.200" stroke-linejoin="round"/><path d="M10.300 2.800Q13.600 3.200 13.500 7.200" fill="none" stroke="#D4484E" stroke-width="1.100"/></svg><span class="abs" style="left:23px;top:0;font-size:10.7px">NinjaTrader 7 lic.emu v5.06</span></div>
<div class="abs" style="left:1659px;top:1053px;width:16px;height:16px;background:#0A246A;color:#fff;font-size:10px;line-height:16px;text-align:center">EN</div>
<div class="abs" style="left:1680px;top:1050px;width:2px;height:23px;border-left:1px solid #808080;border-right:1px solid #fff"></div>
<div class="abs" style="left:1685px;top:1050px;width:81px;height:24px;border:1px solid;border-color:#808080 #fff #fff #808080;font-size:11px;line-height:22px"><svg class="abs" style="left:3px;top:2px" width="18" height="18" viewBox="0 0 18 18"><circle cx="7" cy="7" r="4.500" fill="#8A8A8A" stroke="#444" stroke-width="1.200"/><path d="M9 12q3 0 5-3M10 15q4 0 6-4" fill="none" stroke="#7088E0" stroke-width="1.300"/></svg><span class="abs" style="left:29px;top:0">2:36 PM</span></div>

</body></html>
